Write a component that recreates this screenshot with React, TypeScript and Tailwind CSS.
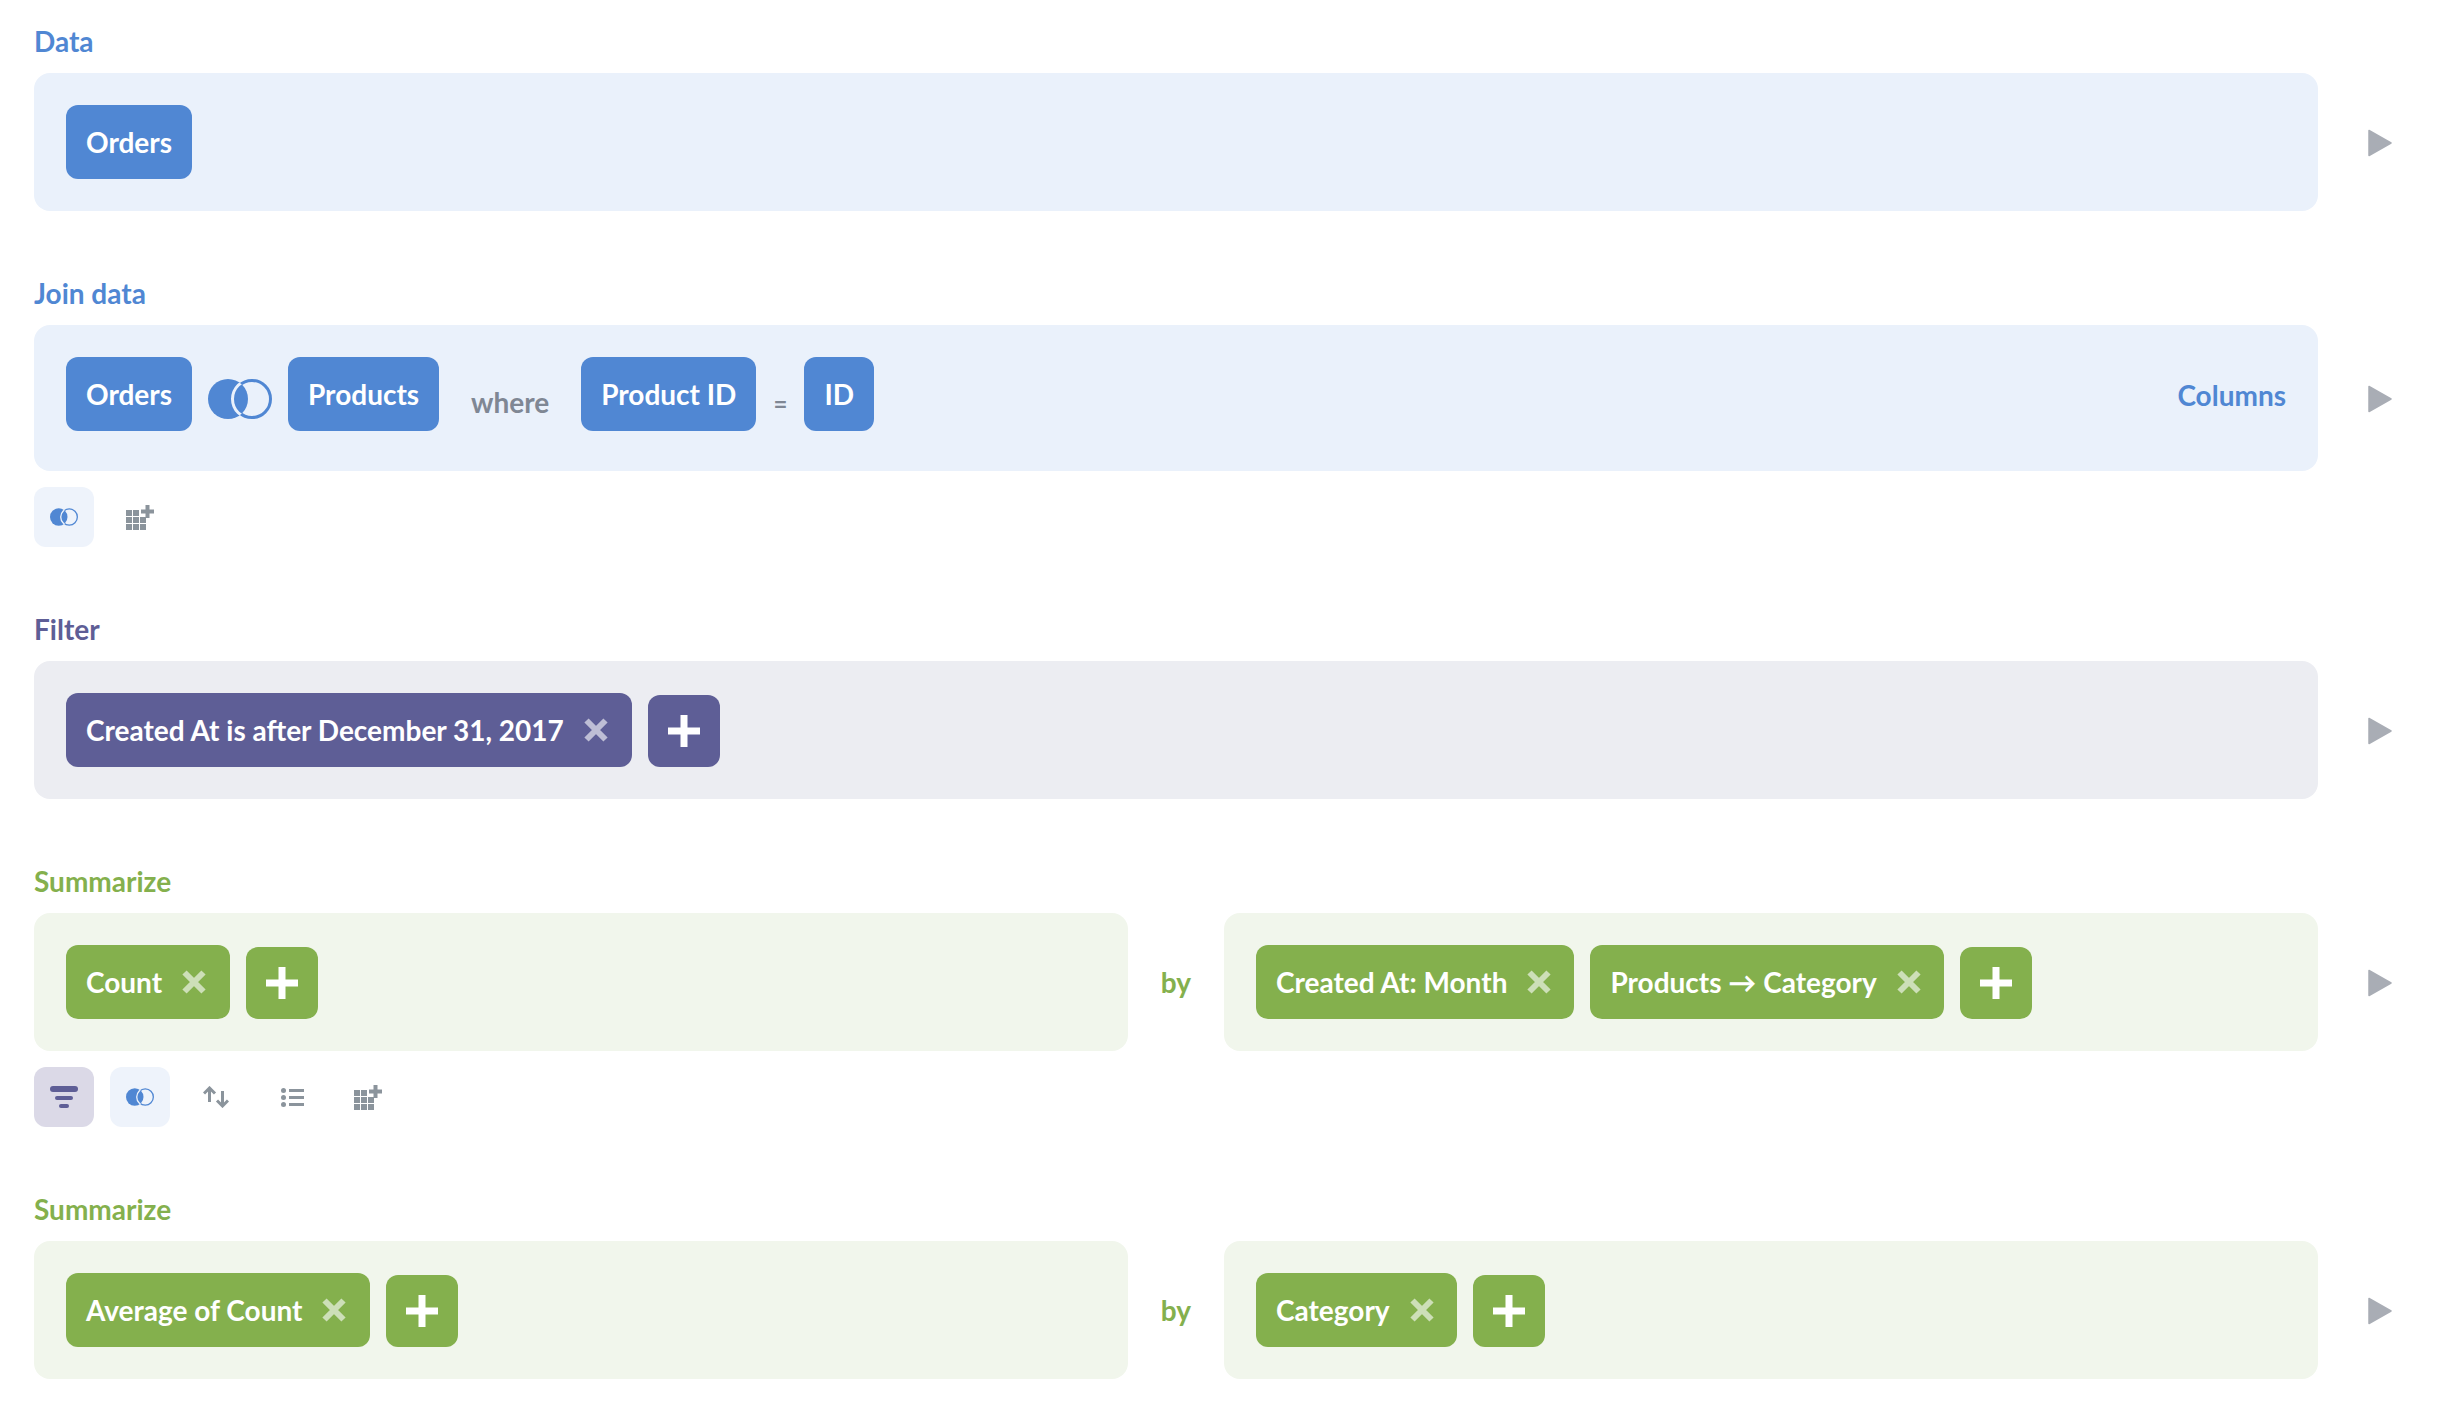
const font = "font-['Lato',sans-serif]";

type Tone = "blue" | "purple" | "green";

const PILL: Record<Tone, string> = {
  blue: "bg-[#5087d3]",
  purple: "bg-[#5e5e96]",
  green: "bg-[#84b04d]",
};

const PANEL: Record<Tone, string> = {
  blue: "bg-[#eaf1fb]",
  purple: "bg-[#ecedf2]",
  green: "bg-[#f1f6ec]",
};

const LABEL: Record<Tone, string> = {
  blue: "text-[#5087d3]",
  purple: "text-[#5e5e96]",
  green: "text-[#84b04d]",
};

function Pill({ tone, children, onRemove, wide }: { tone: Tone; children: string; onRemove?: boolean; wide?: boolean }) {
  return (
    <div
      className={`flex h-[74px] shrink-0 items-center rounded-xl pl-5 text-[28px] font-bold text-white ${
        onRemove ? (wide ? "pr-6" : "pr-[23px]") : "pr-5"
      } ${PILL[tone]}`}
    >
      <span className="whitespace-nowrap">{children}</span>
      {onRemove && (
        <svg viewBox="0 0 24 24" className="ml-5 h-6 w-6 opacity-60">
          <path d="M2.5 2.5 L21.5 21.5 M21.5 2.5 L2.5 21.5" stroke="#fff" strokeWidth="6" fill="none" />
        </svg>
      )}
    </div>
  );
}

function AddButton({ tone }: { tone: Tone }) {
  return (
    <div className={`flex h-[72px] w-[72px] shrink-0 items-center justify-center self-end rounded-xl ${PILL[tone]}`}>
      <svg viewBox="0 0 32 32" className="h-8 w-8">
        <path d="M12.5 0h7v12.5H32v7H19.5V32h-7V19.5H0v-7h12.5z" fill="#fff" />
      </svg>
    </div>
  );
}

function Play() {
  return (
    <svg viewBox="0 0 24 28" className="ml-[50px] mt-[2px] h-7 w-6 shrink-0">
      <path d="M1 1.5 L23 14 L1 26.5 Z" fill="#a9adb5" stroke="#a9adb5" strokeWidth="1.5" strokeLinejoin="round" />
    </svg>
  );
}

// left disc, right ring; the ring turns background-coloured where it crosses the disc
function Venn({ className, bg }: { className: string; bg: string }) {
  return (
    <svg viewBox="0 0 64 40" className={className}>
      <defs>
        <clipPath id="venn-disc">
          <circle cx="20" cy="20" r="20" />
        </clipPath>
      </defs>
      <circle cx="20" cy="20" r="20" fill="#5087d3" />
      <circle cx="44" cy="20" r="18.5" fill="none" stroke="#5087d3" strokeWidth="3" />
      <circle cx="44" cy="20" r="19.5" fill="none" stroke={bg} strokeWidth="3" clipPath="url(#venn-disc)" />
    </svg>
  );
}

function GridPlus() {
  const cells = [
    [0, 5], [7, 5],
    [0, 12], [7, 12], [14, 12],
    [0, 19], [7, 19], [14, 19],
  ];
  return (
    <svg viewBox="0 0 28 25" className="h-[25px] w-7">
      {cells.map(([x, y]) => (
        <rect key={`${x}-${y}`} x={x} y={y} width="6" height="6" fill="#8b949c" />
      ))}
      <path d="M19.5 0h4v4.5H28v4h-4.5V13h-4V8.5H15v-4h4.5z" fill="#8b949c" />
    </svg>
  );
}

function FilterIcon() {
  return (
    <svg viewBox="0 0 28 22" className="h-[22px] w-7">
      <rect x="0" y="0" width="28" height="6" rx="3" fill="#5e5e96" />
      <rect x="5" y="10" width="18" height="4" rx="2" fill="#5e5e96" />
      <rect x="9" y="18" width="10" height="4" rx="2" fill="#5e5e96" />
    </svg>
  );
}

function SortIcon() {
  return (
    <svg viewBox="0 0 26 22" className="h-[22px] w-[26px]" fill="none" stroke="#8b949c" strokeWidth="3">
      <path d="M6.5 16V2 M1 7.5l5.5-5.5 5.5 5.5" />
      <path d="M19.5 5v15 M14 14.5l5.5 5.5 5.5-5.5" />
    </svg>
  );
}

function ListIcon() {
  return (
    <svg viewBox="0 0 23 19" className="h-[19px] w-[23px]" fill="#8b949c">
      <circle cx="2.5" cy="2.5" r="2.5" />
      <circle cx="2.5" cy="9.5" r="2.5" />
      <circle cx="2.5" cy="16.5" r="2.5" />
      <rect x="8" y="1" width="15" height="3" />
      <rect x="8" y="8" width="15" height="3" />
      <rect x="8" y="15" width="15" height="3" />
    </svg>
  );
}

function ToolButton({ bg, children }: { bg?: string; children: React.ReactNode }) {
  return <div className={`flex h-[60px] w-[60px] items-center justify-center rounded-xl ${bg ?? ""}`}>{children}</div>;
}

function Section({ label, tone, children, toolbar }: { label: string; tone: Tone; children: React.ReactNode; toolbar?: React.ReactNode }) {
  return (
    <section className="mb-[66px]">
      <h2 className={`mb-4 h-8 text-[28px] font-bold leading-8 ${LABEL[tone]}`}>{label}</h2>
      <div className="flex items-center">
        {children}
        <Play />
      </div>
      {toolbar && <div className="mt-4 flex gap-4">{toolbar}</div>}
    </section>
  );
}

function SummarizeRow({ left, right }: { left: React.ReactNode; right: React.ReactNode }) {
  return (
    <div className="flex w-[2284px] items-center">
      <div className={`flex h-[138px] w-[1094px] items-start gap-4 rounded-2xl p-8 ${PANEL.green}`}>{left}</div>
      <div className={`flex-1 text-center text-[28px] font-bold ${LABEL.green}`}>by</div>
      <div className={`flex h-[138px] w-[1094px] items-start gap-4 rounded-2xl p-8 ${PANEL.green}`}>{right}</div>
    </div>
  );
}

export default function App() {
  return (
    <div className={`h-[1414px] overflow-hidden bg-white pl-[34px] pt-[25px] ${font}`}>
      <Section label="Data" tone="blue">
        <div className={`flex h-[138px] w-[2284px] rounded-2xl p-8 ${PANEL.blue}`}>
          <Pill tone="blue">Orders</Pill>
        </div>
      </Section>

      <Section
        label="Join data"
        tone="blue"
        toolbar={
          <>
            <ToolButton bg="bg-[#eef3fb]">
              <Venn className="h-[18px] w-7" bg="#eef3fb" />
            </ToolButton>
            <ToolButton>
              <GridPlus />
            </ToolButton>
          </>
        }
      >
        <div className={`flex h-[146px] w-[2284px] items-start rounded-2xl pl-8 pr-8 pt-8 ${PANEL.blue}`}>
          <Pill tone="blue">Orders</Pill>
          <Venn className="mx-4 mt-[22px] h-10 w-16" bg="#eaf1fb" />
          <Pill tone="blue">Products</Pill>
          <span className="mt-[29px] w-[142px] text-center text-[28px] font-bold leading-8 text-[#7f8794]">where</span>
          <Pill tone="blue">Product ID</Pill>
          <span className="mt-[31px] w-12 text-center text-[24px] font-bold leading-8 text-[#7f8794]">=</span>
          <Pill tone="blue">ID</Pill>
          <span className={`ml-auto mt-[22px] text-[28px] font-bold leading-8 ${LABEL.blue}`}>Columns</span>
        </div>
      </Section>

      <Section label="Filter" tone="purple">
        <div className={`flex h-[138px] w-[2284px] items-start gap-4 rounded-2xl p-8 ${PANEL.purple}`}>
          <Pill tone="purple" onRemove wide>Created At is after December 31, 2017</Pill>
          <AddButton tone="purple" />
        </div>
      </Section>

      <Section
        label="Summarize"
        tone="green"
        toolbar={
          <>
            <ToolButton bg="bg-[#dbd9e7]">
              <FilterIcon />
            </ToolButton>
            <ToolButton bg="bg-[#eef3fb]">
              <Venn className="h-[18px] w-7" bg="#eef3fb" />
            </ToolButton>
            <ToolButton>
              <SortIcon />
            </ToolButton>
            <ToolButton>
              <ListIcon />
            </ToolButton>
            <ToolButton>
              <GridPlus />
            </ToolButton>
          </>
        }
      >
        <SummarizeRow
          left={
            <>
              <Pill tone="green" onRemove wide>Count</Pill>
              <AddButton tone="green" />
            </>
          }
          right={
            <>
              <Pill tone="green" onRemove>Created At: Month</Pill>
              <Pill tone="green" onRemove>Products → Category</Pill>
              <AddButton tone="green" />
            </>
          }
        />
      </Section>

      <Section label="Summarize" tone="green">
        <SummarizeRow
          left={
            <>
              <Pill tone="green" onRemove wide>Average of Count</Pill>
              <AddButton tone="green" />
            </>
          }
          right={
            <>
              <Pill tone="green" onRemove>Category</Pill>
              <AddButton tone="green" />
            </>
          }
        />
      </Section>
    </div>
  );
}
